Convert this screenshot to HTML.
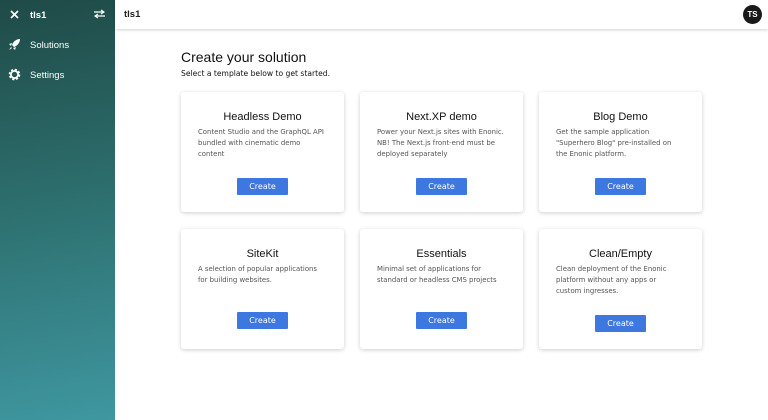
<!DOCTYPE html>
<html><head><style>
*{box-sizing:border-box;margin:0;padding:0}
body{width:768px;height:420px;overflow:hidden;font-family:"Liberation Sans",sans-serif;background:#fff;position:relative}
.side{position:absolute;left:0;top:0;width:115px;height:420px;background:linear-gradient(170deg,#1f4a47 0%,#2c6d6c 45%,#3f97a0 100%);color:#fff}
.side .it{position:absolute;left:30px;font-size:9.5px}
.top{position:absolute;left:115px;top:0;right:0;height:29px;background:#fff;box-shadow:0 1px 3px rgba(0,0,0,.18)}
.top span{position:absolute;left:9px;top:9px;font-size:9.5px;font-weight:bold;color:#222}
.av{position:absolute;right:6px;top:5px;width:19px;height:19px;border-radius:50%;background:#1a1a1a;color:#fff;font-size:8px;font-weight:bold;text-align:center;line-height:19px}
h1{position:absolute;left:181px;top:49px;font-size:14px;font-weight:normal;color:#111}
.sub{position:absolute;left:181px;top:69px;font-size:7.6px;color:#111;font-family:"DejaVu Sans",sans-serif}
.card{position:absolute;width:163px;height:120px;background:#fff;border-radius:3px;box-shadow:0 1px 4px rgba(0,0,0,.2)}
.card h2{font-size:11px;font-weight:normal;text-align:center;margin-top:19px;color:#111}
.card p{font-family:"DejaVu Sans",sans-serif;font-size:6.9px;color:#555;margin:4px 4px 0 17px;line-height:11px;white-space:nowrap}
.btn{position:absolute;left:56px;width:51px;height:17px;background:#3c78e0;color:#fff;font-size:8px;text-align:center;line-height:17px;border-radius:1px;font-family:"DejaVu Sans",sans-serif}
</style></head><body>
<div class="side">
<svg style="position:absolute;left:10px;top:10px" width="9" height="9" viewBox="0 0 9 9"><path d="M1 1L8 8M8 1L1 8" stroke="#fff" stroke-width="1.6"/></svg>
<div class="it" style="top:10px;font-weight:bold">tls1</div>
<svg style="position:absolute;left:94px;top:9px" width="11" height="10" viewBox="0 0 11 10"><path d="M0 3H9M7 1L10 3L7 5M11 7H2M4 5L1 7L4 9" stroke="#fff" stroke-width="1.2" fill="none"/></svg>
<svg style="position:absolute;left:8px;top:38px" width="13" height="13" viewBox="0 0 13 13"><path d="M12 1C8 1 5 4 4 7L6 9C9 8 12 5 12 1ZM4 5L1 6L3 8ZM8 9L7 12L5 10ZM3 9L1 12L4 10Z" fill="#fff"/></svg>
<div class="it" style="top:40px">Solutions</div>
<svg style="position:absolute;left:8px;top:68px" width="13" height="13" viewBox="0 0 13 13"><circle cx="6.5" cy="6.5" r="4.5" fill="none" stroke="#fff" stroke-width="2.6" stroke-dasharray="2 1.55"/><circle cx="6.5" cy="6.5" r="3.6" fill="none" stroke="#fff" stroke-width="1.8"/></svg>
<div class="it" style="top:70px">Settings</div>
</div>
<div class="top"><span>tls1</span><div class="av">TS</div></div>
<h1>Create your solution</h1>
<div class="sub">Select a template below to get started.</div>
<div class="card" style="left:181px;top:92px"><h2>Headless Demo</h2><p>Content Studio and the GraphQL API<br>bundled with cinematic demo<br>content</p><div class="btn" style="top:86px">Create</div></div>
<div class="card" style="left:360px;top:92px"><h2>Next.XP demo</h2><p>Power your Next.js sites with Enonic.<br>NB! The Next.js front-end must be<br>deployed separately</p><div class="btn" style="top:86px">Create</div></div>
<div class="card" style="left:539px;top:92px"><h2>Blog Demo</h2><p>Get the sample application<br>"Superhero Blog" pre-installed on<br>the Enonic platform.</p><div class="btn" style="top:86px">Create</div></div>
<div class="card" style="left:181px;top:229px"><h2>SiteKit</h2><p>A selection of popular applications<br>for building websites.</p><div class="btn" style="top:83px">Create</div></div>
<div class="card" style="left:360px;top:229px"><h2>Essentials</h2><p>Minimal set of applications for<br>standard or headless CMS projects</p><div class="btn" style="top:83px">Create</div></div>
<div class="card" style="left:539px;top:229px"><h2>Clean/Empty</h2><p>Clean deployment of the Enonic<br>platform without any apps or<br>custom ingresses.</p><div class="btn" style="top:86px">Create</div></div>
</body></html>
